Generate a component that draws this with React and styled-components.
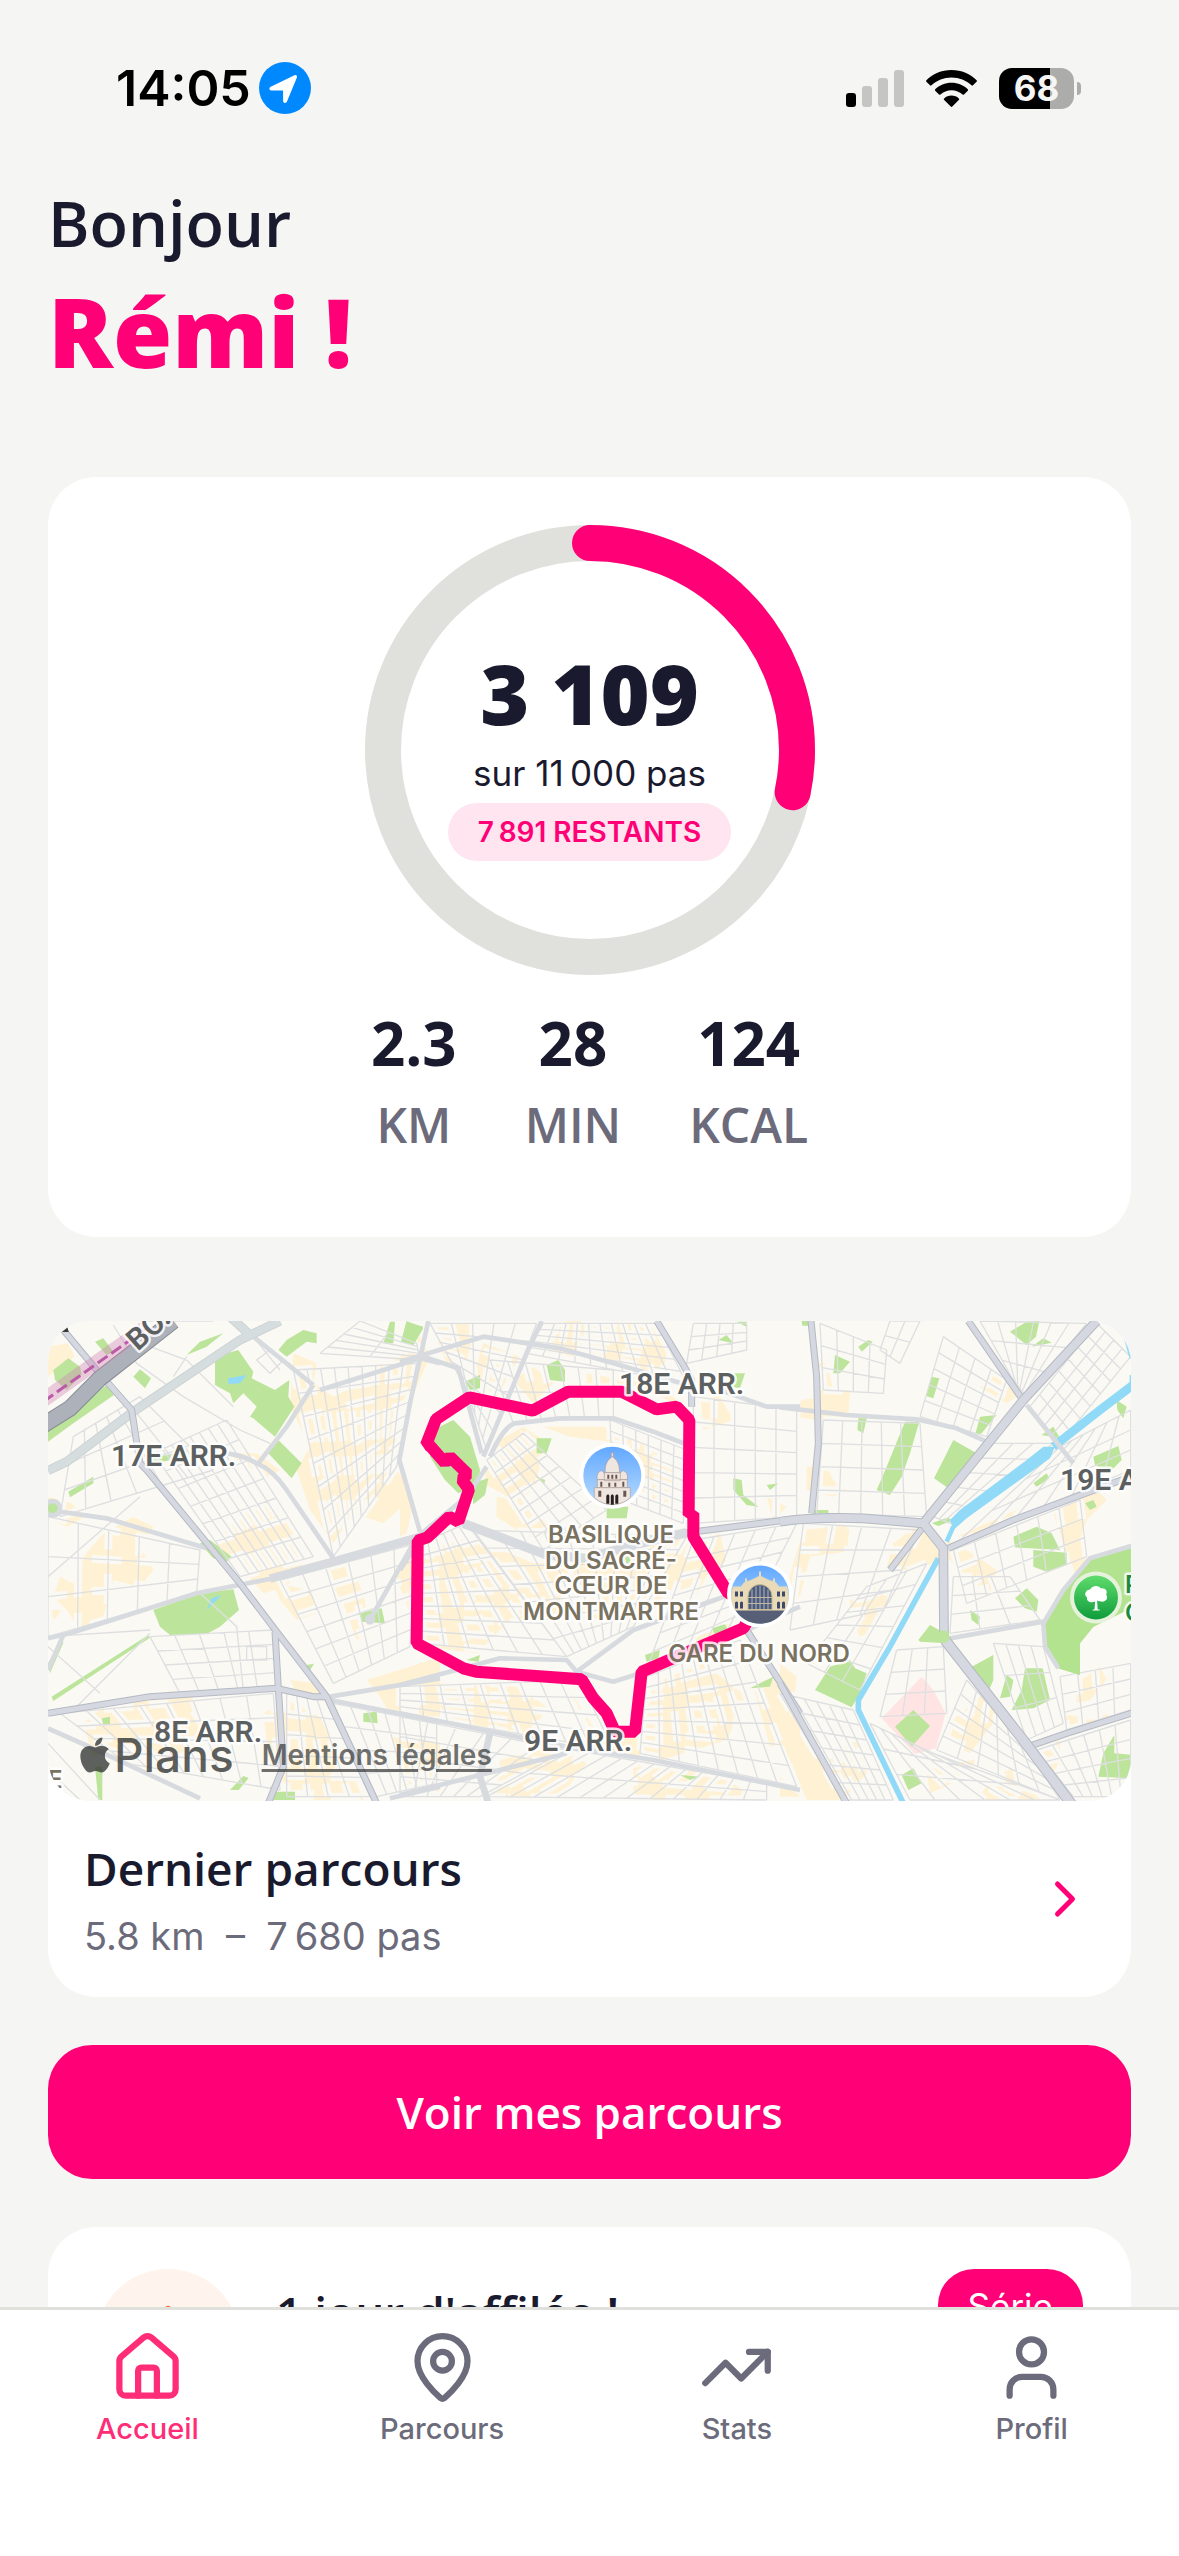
import React from "react";
import styled, { createGlobalStyle } from "styled-components";
import { House, MapPin, TrendingUp, User, ChevronRight, Flame } from "lucide-react";
import { FaApple } from "react-icons/fa";

const pink = "#ff0076";
const ink = "#1a1a2e";
const muted = "#6c6b7b";
const line = "#e0e1dc";
const display = `"Open Sans", "Noto Sans", sans-serif`;
const body = `Inter, "Liberation Sans", sans-serif`;

const GlobalStyle = createGlobalStyle`
  *, *::before, *::after { box-sizing: border-box; }
  body { margin: 0; background: #f5f5f3; color: ${ink}; font-family: ${body}; }
  h1, h2, p { margin: 0; }
`;

const Screen = styled.div`
  height: 100vh;
  display: flex;
  flex-direction: column;
  background: #f5f5f3;
`;

const StatusBar = styled.header`
  flex: none;
  display: flex;
  justify-content: space-between;
  align-items: center;
  padding: 62px 98px 0 116px;
  color: #000;
`;

const StatusGroup = styled.div`
  display: flex;
  align-items: center;
  gap: ${(p) => p.$gap}px;
`;

const Clock = styled.span`
  font-size: 50px;
  line-height: 52px;
  font-weight: 600;
`;

const Battery = styled.div`
  position: relative;
  width: 75px;
  height: 41px;
  margin-right: 7px;
  border-radius: 13px;
  background: linear-gradient(90deg, #000 68%, #acacab 68%);
  color: #f5f5f3;
  font-size: 35px;
  line-height: 41px;
  font-weight: 700;
  text-align: center;
  &::after {
    content: "";
    position: absolute;
    left: 78px;
    top: 14px;
    width: 4px;
    height: 13px;
    border-radius: 0 6px 6px 0;
    background: #acacab;
  }
`;

const Main = styled.main`
  flex: 1;
  min-height: 0;
  overflow-y: auto;
  scrollbar-width: none;
  display: flex;
  flex-direction: column;
  gap: 48px;
  padding: 68px 48px 48px;
  & > * { flex: none; }
`;

const Greeting = styled.h1`
  display: flex;
  flex-direction: column;
  gap: 8px;
  margin-bottom: 39px;
  font-family: ${display};
`;

const Hello = styled.span`
  font-size: 63px;
  line-height: 82px;
  font-weight: 600;
`;

const Name = styled.span`
  font-size: 96px;
  line-height: 118px;
  font-weight: 800;
  color: ${pink};
`;

const Card = styled.section`
  background: #fff;
  border-radius: 48px;
`;

const GoalCard = styled(Card)`
  display: flex;
  flex-direction: column;
  align-items: center;
  gap: 32px;
  margin-bottom: 36px;
  padding: 48px 48px 82px;
`;

const Ring = styled.div`
  display: grid;
  place-items: center;
  & > * { grid-area: 1 / 1; }
`;

const RingContent = styled.div`
  display: flex;
  flex-direction: column;
  align-items: center;
  gap: 6px;
  padding-top: 4px;
`;

const Steps = styled.span`
  font-family: ${display};
  font-size: 84px;
  line-height: 100px;
  font-weight: 800;
`;

const Goal = styled.span`
  font-size: 35px;
  line-height: 48px;
`;

const Remaining = styled.span`
  padding: 0 30px;
  border-radius: 29px;
  background: #ffe5ef;
  color: ${pink};
  font-size: 28px;
  line-height: 58px;
  font-weight: 600;
`;

const Stats = styled.div`
  display: flex;
  gap: 68px;
`;

const Stat = styled.div`
  display: flex;
  flex-direction: column;
  align-items: center;
  gap: 16px;
  font-family: ${display};
`;

const StatValue = styled.span`
  font-size: 60px;
  line-height: 72px;
  font-weight: 700;
`;

const StatUnit = styled.span`
  font-size: 48px;
  line-height: 60px;
  font-weight: 600;
  color: ${muted};
`;

const MapFrame = styled.div`
  position: relative;
  height: 480px;
  border-radius: 42px;
  overflow: hidden;
  background: #fbf9f3;
  & > svg { display: block; width: 100%; height: 100%; }
`;

const MapCredit = styled.div`
  position: absolute;
  left: 32px;
  bottom: 18px;
  display: flex;
  align-items: center;
  gap: 28px;
  color: rgba(50, 52, 50, 0.78);
`;

const MapBrand = styled.span`
  display: flex;
  align-items: center;
  gap: 4px;
  font-size: 46px;
  line-height: 56px;
  font-weight: 500;
  & > svg { width: 30px; height: 40px; }
`;

const MapLegal = styled.a`
  color: rgba(50, 52, 50, 0.7);
  font-size: 28px;
  line-height: 32px;
  font-weight: 600;
  text-decoration-thickness: 3px;
  text-underline-offset: 4px;
`;

const RouteLink = styled.a`
  display: flex;
  align-items: center;
  justify-content: space-between;
  padding: 36px;
  color: inherit;
  text-decoration: none;
`;

const RouteText = styled.div`
  display: flex;
  flex-direction: column;
  gap: 12px;
`;

const Title = styled.h2`
  font-family: ${display};
  font-size: 46px;
  line-height: 62px;
  font-weight: 600;
`;

const RouteMeta = styled.p`
  font-size: 38px;
  line-height: 50px;
  color: ${muted};
  white-space: pre-wrap;
`;

const PrimaryButton = styled.button`
  width: 100%;
  height: 134px;
  border: 0;
  border-radius: 44px;
  background: ${pink};
  color: #fff;
  font-family: ${display};
  font-size: 44px;
  line-height: 60px;
  font-weight: 600;
`;

const StreakCard = styled(Card)`
  display: flex;
  align-items: flex-start;
  gap: 36px;
  padding: 42px 48px;
`;

const StreakIcon = styled.span`
  display: grid;
  place-items: center;
  width: 144px;
  height: 144px;
  border-radius: 50%;
  background: #fff3ed;
  color: #ff6b35;
`;

const StreakText = styled.div`
  flex: 1;
  padding-top: 12px;
`;

const Tag = styled.span`
  padding: 0 30px;
  border-radius: 36px;
  background: ${pink};
  color: #fff;
  font-size: 35px;
  line-height: 74px;
`;

const TabBar = styled.nav`
  flex: none;
  display: grid;
  grid-template-columns: repeat(4, 1fr);
  padding: 20px 0 96px;
  border-top: 3px solid ${line};
  background: #fff;
`;

const Tab = styled.a`
  display: flex;
  flex-direction: column;
  align-items: center;
  gap: 6px;
  padding-bottom: 13px;
  color: ${(p) => (p.$active ? "#ff2d78" : muted)};
  font-size: 29px;
  line-height: 36px;
  font-weight: 500;
  text-decoration: none;
`;

/* ---------- map drawing ---------- */

const tiles = [-8, 352, 732];

const Tile = ({ n, children }) => (
  <g transform={`translate(${tiles[n]} -11) scale(0.33333)`}>{children}</g>
);

// Street mesh stretched over a quadrilateral: corners a, b, c, d in order.
const mesh = (a, b, c, d, cols, rows) => {
  const mix = (p, q, t) => [
    Math.round(p[0] + (q[0] - p[0]) * t),
    Math.round(p[1] + (q[1] - p[1]) * t),
  ];
  let out = "";
  for (let i = 0; i <= cols; i++) {
    out += `M${mix(a, b, i / cols)}L${mix(d, c, i / cols)}`;
  }
  for (let j = 0; j <= rows; j++) {
    out += `M${mix(a, d, j / rows)}L${mix(b, c, j / rows)}`;
  }
  return out;
};

const blocks = [
  "M24 110l60-10 20 40-80 60zM760 130l70 30-10 60 60 40 120-60 60-90 80 60-60 120-20 160 50 120-80 70-90-30-60 90-70-100-40-120 40-70-60-120zM24 560l70 20 40 40-50 30-60-20zM130 740l60-70 90-50 60 30-40 60 40 70-40 50-80-20-30 110-70 40-40-60-40-40 20-60 60 30zM520 690l80-60 60-60 80 70 60 100-60 90-70 20-80-90zM850 780l80-20 40 90 20 110-40 30-40-110zM700 820l110 20 20 70-60 20-50-60zM1060 780l100-60 40 10v160l-90 20zM130 1240l60-50 220-50 100 0-60 70 40 60-100 90-120-60-110 40zM670 1210l70-40 100 50 60 130-60 90-100 0-60-150zM980 1110l130-40 90-30v180l-150-10-30-50zM560 430l90 0 70 50-40 20zM24 900l40 0-20 30zM1050 1270l150 30v150l-90-60zM750 1110l80 10 20 50-80-20zM830 1400l110 0 30 70h-150z",
  "M0 100l60-20 30 60-40 90-50 40zM90 40l140 0-30 110-60 10zM250 100l110 40-70 120-70-60zM450 40l90-10 40 60-60 50-100-30zM560 40l190 0 60 110-60 40-180-60zM400 170l60 50-60 60-60-70zM560 190l230 40 60 60-160-70-130 0zM0 480l40 100-20 90-20 10zM280 400l90-50 60 40-20 130-50 60-110-60zM430 350l180 0 110 50 100 60-10 140-90-60-50-140-160-20zM290 560l100 20 70 90-80 10-90-60zM80 720l130-40 190 80 110 0-40 150-150 30-90 90-150-20zM520 760l150-30 150 60-50 100-130 60-110-50zM700 700l140-30 90 110-50 90-120-50zM100 1120l250 10 90 60-40 80-230-30-60-60zM500 1130l100 150 130 0 30-160 150-60 130 100-60 130-260 80-110-50zM0 1290l120 20-10 90-110 30zM300 1350l160-40 100 50-80 100-190 0zM700 1370l260 20 80 60-60 20h-280zM60 1000l100 40-40 20zM1060 1130l80-40 60 100v110l-90 10zM900 700l60-30 20 90-30 20zM880 960l120-20-20 70-80 30zM1100 560l60 30-40 40zM900 250l60 10 40 70-90 30z",
  "M100 160l40 0 20 80 50 0-5 80-90 10-80-10 30-50 40-5zM80 470l60 0 20 40 40 30-40 20-80-20zM70 660l140-15-10 80-110 15-30 120-50 0zM340 700l80-60 60 60 0 50-90 40-70-20zM210 870l60-50 60 10-30 120-60 30-30-60zM500 690l60 30 90 60-20 70-70-50-60-60zM530 680l190-85 20 30-110 50zM600 230l60-60 50 90-30 20zM820 610l130-70 30 30-60 60-20 60 20 70-30 40-40-100zM0 1060l50 40-10 100-40 20zM0 1280l80-20 50 80 100-50 30 100-70 80h-110zM440 1380l180-40-60 60-110 50zM520 1230l90-80 60 50-100 130-60-30zM760 1320l80-30 0 60-20 40zM850 1210l80 20 60-20-40 50-90 10zM890 1120l70-50 20 40-50 60-40 10zM610 1440l80-70 90 100h-170zM0 1400l60 60h-60z",
];

const greens = [
  "M525 140l70-20 45 65-5 20 70 35 43-30-3 50 18 30-58 90-65-55-10-5 20-30-40-40-30 30-10-30-45-25zM715 390l70 70-30 45-70-75zM340 900l140-50 100-12 17 62-57 50-40 22-110 3-30-25zM440 135l40-40 70-25-50 40zM40 180l45-35 35 25 5 25-45 45-35-30zM165 95l25-10 30 40-20 10zM280 200l20-22 33 27-18 30zM24 395v-65l126-70 50-35 22 30-122 85zM85 545l75-45v20l-70 42zM715 120l25-30 50-30 40 10v30l-30-5-60 45zM1050 35h15l-5 65h-30zM1100 33l50 22-30 50-37-10zM480 700l30-10 65 50-15 15-40-10zM960 910l65-15 10 45-70-5zM970 1210l40-5 3 35-43-5zM185 1225l25-5v25h-20zM690 1425l10 20h65v25h-65zM35 1160l290-185 5 8-290 190zM330 445l60-12 50-12v8l-60 24-50 5zM24 1060l40-70 6 8-40 92zM570 1440l40-42 16 6-30 36zM165 1370h22v100h-12zM800 1065l22-4-12 20z",
  "M5 90l15-55 50 15-30 55zM100 360l60-30 50 50 30 100-5 40-60 30-40-40-45-70zM215 520l50-15-10 50-35 28zM195 215l45-20v40l-30 5zM440 165l35-15 20 30v35l-45-5zM410 385l45 0-15 45h-30zM1000 190h35l-15 45-25-5zM955 90l25-15 20 25zM1010 35h30v16zM1000 505l25 5 5 45 45 35-35-5-40-45zM1100 525l35-5-25 20zM620 590h65l-5 35h-60zM735 1035l45-15-5 25-35 10zM1050 1135l70-35-10 30zM840 1395l60 5-30 10zM200 1050l40-15-5 20zM405 498l30 12-2 14zM935 955l40-12 10 20-40 10zM675 740h16v20h-12z",
  "M690 65l50-30 38-2-10 47-28 25zM755 110l35-25 25 13zM235 110l30-20 13 5-33 30zM165 135l45 20-30 35h-20zM455 200l23 5-18 60-22-7zM235 325h25l-10 45-18-10zM375 335h43l-28 95-25 70-35 55-40-15 30-70zM520 390l70 40-85 105-43-30 33-65zM600 320l50-5-45 55-20 5zM1010 270l30 20-10 35-18-25zM940 440l75-32 10 42-35 35-45-20zM760 520l40-30 8 15-38 25zM915 580l25-10 10 20-20 10zM700 680l70-30 45 20 25 50-135-8zM760 720l100 8v37l-60 20-40-15zM705 865l35-30 35 35-5 35-35-10zM570 900l30 20-5 25-20-15zM415 990l35-45 55 30-5 25-80-5zM150 1070l60-20 15 25 35 15-20 60-25 42-110-52zM575 1070l65-35v75l-15 35zM680 1095l20 15-10 50-30 5zM735 1075h53l22 95-50 25-65 5 30-60zM365 1395l35-20 25 45-40 20zM970 1330l33-55v55l60 5v70l-108-5zM785 375l35-25 20 35zM455 640l50-18 10 10-40 16zM100 600h45v12h-45zM1063 705l-133 40-80 95-60 100 5 70 40 65 65 20v-95l40-50 123-60zM65 33h20v14h-18z",
];

const streets = [
  mesh([100, 380], [300, 260], [520, 480], [60, 620], 6, 3) +
    mesh([340, 430], [560, 330], [820, 740], [600, 800], 8, 7) +
    mesh([760, 180], [1130, 160], [1070, 470], [880, 740], 9, 8) +
    mesh([840, 130], [960, 33], [1130, 100], [1140, 150], 5, 2) +
    mesh([24, 620], [480, 720], [470, 850], [24, 980], 5, 3) +
    mesh([720, 810], [1130, 700], [1110, 1010], [880, 1120], 6, 6) +
    mesh([330, 980], [700, 960], [710, 1130], [420, 1150], 5, 4) +
    mesh([60, 1210], [700, 1150], [720, 1440], [260, 1360], 8, 4) +
    mesh([740, 1150], [860, 1170], [990, 1460], [740, 1460], 4, 5) +
    mesh([880, 1180], [1190, 1240], [1190, 1420], [1010, 1460], 6, 4) +
    "M220 45L290 160L430 260L600 360L690 400M330 110L440 150L580 290M440 140L400 200M640 80L720 180M24 980L330 960M24 1010L180 1150M100 1200L330 970M24 800L300 560M480 850L590 950L610 1140M24 1300L180 1470M24 1380L120 1470M300 33L520 33M650 150l40-30 35 35-35 35zM620 1010h60v40h-60z",
  mesh([90, 40], [410, 40], [260, 420], [200, 240], 5, 7) +
    mesh([430, 40], [770, 40], [860, 220], [380, 130], 10, 5) +
    mesh([270, 150], [640, 180], [640, 320], [340, 340], 7, 2) +
    mesh([260, 450], [370, 370], [620, 600], [430, 720], 5, 7) +
    mesh([630, 330], [860, 420], [850, 640], [640, 560], 6, 7) +
    mesh([60, 700], [200, 640], [500, 1040], [60, 1000], 6, 8) +
    mesh([220, 660], [860, 680], [700, 950], [500, 1040], 9, 7) +
    mesh([880, 690], [1190, 640], [1040, 940], [740, 1080], 5, 7) +
    mesh([0, 1130], [540, 1110], [640, 1320], [0, 1210], 9, 4) +
    mesh([0, 1220], [500, 1320], [240, 1460], [0, 1460], 6, 4) +
    mesh([520, 1320], [1100, 1420], [1100, 1470], [260, 1460], 12, 2) +
    mesh([740, 1100], [1020, 990], [1190, 1430], [720, 1330], 8, 7) +
    mesh([880, 260], [1190, 300], [1190, 620], [880, 640], 5, 5) +
    mesh([880, 40], [1040, 40], [1040, 120], [860, 160], 4, 3),
  mesh([120, 40], [320, 120], [310, 250], [130, 240], 4, 3) +
    mesh([330, 33], [420, 33], [360, 160], [300, 120], 2, 2) +
    mesh([490, 80], [680, 210], [620, 380], [420, 320], 4, 5) +
    mesh([600, 33], [920, 40], [740, 260], [700, 210], 6, 3) +
    mesh([950, 40], [1052, 140], [840, 400], [750, 290], 4, 7) +
    mesh([130, 330], [420, 340], [440, 620], [110, 610], 5, 4) +
    mesh([640, 400], [820, 400], [510, 640], [460, 620], 3, 5) +
    mesh([840, 410], [1052, 300], [1052, 480], [530, 700], 6, 3) +
    mesh([520, 720], [900, 570], [920, 740], [560, 880], 6, 3) +
    mesh([70, 640], [420, 660], [310, 900], [30, 960], 4, 4) +
    mesh([260, 830], [440, 760], [240, 1140], [80, 1060], 3, 6) +
    mesh([350, 1020], [490, 1010], [500, 1210], [300, 1220], 3, 3) +
    mesh([520, 800], [690, 800], [780, 930], [510, 970], 3, 3) +
    mesh([0, 1150], [220, 1200], [340, 1470], [190, 1470], 6, 6) +
    mesh([470, 1320], [560, 1110], [740, 1310], [840, 1470], 5, 6) +
    mesh([270, 1240], [460, 1330], [840, 1470], [390, 1470], 6, 3) +
    mesh([640, 1000], [790, 1010], [850, 1240], [740, 1290], 4, 3) +
    mesh([840, 1100], [1052, 1060], [1052, 1200], [860, 1260], 4, 3) +
    mesh([770, 1320], [1052, 1230], [1052, 1460], [880, 1460], 6, 4),
];

const avenues = [
  "M640 80L820 225M840 240L1000 190L1140 145L1200 160M820 225L740 350L655 460M545 430Q600 430 650 460Q700 480 740 540L880 745M1165 33L1110 280L1078 450L1140 665M24 600L200 625L500 715M24 985L90 970L470 850L700 805M870 1160L1200 1105M870 1170L1200 1235M24 1255L170 1320L480 1465M1120 700L990 930M1050 1465L1200 1430M24 1080L70 975",
  "M0 155L250 80L480 115L640 160L880 230M70 140L175 175L245 430M425 33L380 130L250 440M260 470L200 560L40 690M270 440Q310 350 345 340L480 325L640 325L760 365L865 405M960 240L1100 290L1200 290M530 1085L700 960L1000 850M1040 960L1200 890M0 1125L300 1045L500 1050L530 1085L640 1115L720 1090M0 1210L500 1310L760 1350L1200 1440M0 1455L240 1395L500 1330M60 690L0 780",
  "M0 292L200 315L410 328L530 355L620 395M740 285L880 460M510 985L790 935M1063 705L930 745L850 840L790 940L795 1010L835 1075",
];

const boulevards = [
  "M70 60L170 180L275 300L300 460L320 480L600 820L710 965L860 1160L940 1330L1010 1480M705 965L715 1135L730 1370L685 1480M24 1210L330 1160L710 1135L820 1160L860 1160",
  "M770 33L850 165L875 210L875 290M860 668L1200 625M1040 960L1200 1210",
  "M93 33L110 200L115 400L95 610M0 635Q100 620 250 625L430 640L490 715L492 980M950 33L730 270L430 640M565 33L725 265M430 650L330 780M505 715L700 630L1060 497M745 1310L860 1270L1060 1208M0 1120L200 1480",
];

const Label = styled.text`
  font-family: ${(p) => (p.$area ? "Roboto, sans-serif" : body)};
  font-size: ${(p) => (p.$area ? 30 : 24)}px;
  font-weight: 600;
  fill: ${(p) => (p.$park ? "#1c8a3c" : p.$area ? "#5c6060" : "#7a7261")};
  stroke: rgba(255, 255, 255, 0.85);
  stroke-width: 5px;
  stroke-linejoin: round;
  paint-order: stroke;
`;

const sacreCoeur = (
  <g transform="translate(564.3 154.7)">
    <circle r="33" fill="#fff" />
    <circle r="29" fill="url(#sky)" />
    <g fill="#efe6e0" stroke="#a8938c" strokeWidth="0.6">
      <path d="M-1-23h2v5h-2z" />
      <path d="M-7-3c-1-8 3-14 7-16c4 2 8 8 7 16z" />
      <path d="M-15 4c-1-5 1-8 4-9c3 1 4 4 4 9zM7 4c0-5 1-8 4-9c3 1 5 4 4 9z" />
      <path d="M-8-3h16v8h-16zM-15 4h30v8h-30z" />
      <path d="M-18 12h36v10q-8 7-18 7t-18-7z" />
    </g>
    <g fill="#6b5550">
      <path d="M-5-1h2v4h-2zM-1-1h2v4h-2zM3-1h2v4h-2zM-12 6h2v5h-2zM10 6h2v5h-2zM-4 7h2v4h-2zM2 7h2v4h-2z" />
      <path d="M-14 15h3v6h-3zM11 15h3v6h-3z" />
    </g>
    <path d="M-6 28v-8q2-3 3 0v8zM-1.500 29v-9q1.500-3 3 0v9zM3 28v-8q2-3 3 0v8z" fill="#2b2020" />
  </g>
);

const gareDuNord = (
  <g transform="translate(712 273.500)">
    <circle r="33" fill="#fff" />
    <circle r="29" fill="url(#sky)" />
    <path d="M-25 15h50a29 29 0 0 1-50 0z" fill="#565f75" />
    <path d="M-27-8h8l3-4l8-3l8-4l8 4l8 3l3 4h8a29 29 0 0 1-2 24h-50a29 29 0 0 1-2-24z" fill="#eadbb8" />
    <path d="M-1-23h2v5h-2zM-15-16h2v4h-2zM13-16h2v4h-2z" fill="#eadbb8" />
    <path d="M-12 15V2A12 12 0 0 1 12 2V15z" fill="#4a5c84" stroke="#c9b98f" />
    <path d="M-8 15v-20M-4 15v-23M0 15v-24M4 15v-23M8 15v-20M-12 3h24M-12 9h24" stroke="#d8cba6" strokeWidth="0.8" />
    <path d="M-25 14v-6q2-2 3 0v6zM-20 14v-6q2-2 3 0v6zM17 14v-6q2-2 3 0v6zM22 14v-6q2-2 3 0v6zM-25 2v-5h3v5zM-20 2v-5h3v5zM17 2v-5h3v5zM22 2v-5h3v5z" fill="#3d4a6c" />
  </g>
);

const ParisMap = () => (
  <svg viewBox="0 0 1083 480" preserveAspectRatio="xMidYMid slice" role="img" aria-label="Carte du dernier parcours">
    <defs>
      <linearGradient id="sky" x1="0" y1="0" x2="0" y2="1">
        <stop offset="0" stopColor="#62a8ff" />
        <stop offset="1" stopColor="#b9dcff" />
      </linearGradient>
      <linearGradient id="park" x1="0" y1="0" x2="0" y2="1">
        <stop offset="0" stopColor="#5fdc6c" />
        <stop offset="1" stopColor="#0f9c3c" />
      </linearGradient>
    </defs>
    <rect width="1083" height="480" fill="#fbf9f3" />
    {blocks.map((d, n) => (
      <Tile n={n} key={n}><path d={d} fill="#fff1d3" /></Tile>
    ))}
    {streets.map((d, n) => (
      <Tile n={n} key={n}>
        <path d={d} fill="none" stroke="#fbf9f3" strokeWidth="24" strokeDasharray="58 74 90 46" />
      </Tile>
    ))}
    {greens.map((d, n) => (
      <Tile n={n} key={n}><path d={d} fill="#bce49b" /></Tile>
    ))}
    <Tile n={0}>
      <path d="M565 205l55-10-20 25-35 2zM500 900l15-35 30-10-25 25z" fill="#90daf8" />
    </Tile>
    <Tile n={2}>
      <path d="M425 1100l35 40 37 70-29 105-63 17-100-107z" fill="#ffe4e3" />
      <path d="M345 1250l55-50 50 48-55 62z" fill="#bce49b" />
    </Tile>
    {streets.map((d, n) => (
      <Tile n={n} key={n}><path d={d} fill="none" stroke="#dedfe1" strokeWidth="4" /></Tile>
    ))}
    <Tile n={2}>
      <path d="M1063 705l-133 40-80 95-60 100 5 70 40 65 65 20v-95l40-50 123-60z" fill="#b3e38f" />
      <g fill="none" stroke="#90daf8">
        <path d="M1063 222L960 300L820 410" strokeWidth="26" />
        <path d="M520 650L500 695" strokeWidth="14" />
        <path d="M475 745L390 900L330 1010L235 1170V1200L370 1480" strokeWidth="17" />
        <path d="M1040 90L1056 145M1056 195v50" strokeWidth="14" />
      </g>
      <path d="M510 630l30-30 200-150 50-40h35l-15 35-250 180-40 35z" fill="#90daf8" />
    </Tile>
    {avenues.map((d, n) => (
      <Tile n={n} key={n}>
        <path d={d} fill="none" stroke="#d7dbdf" strokeWidth="14" strokeLinejoin="round" />
      </Tile>
    ))}
    <Tile n={0}>
      <circle cx="38" cy="595" r="22" fill="#bce49b" stroke="#d7dbdf" strokeWidth="14" />
      <circle cx="990" cy="928" r="16" fill="#d7dbdf" />
      <g fill="none">
        <path d="M24 482L80 455L280 305L600 90L720 33M570 20L630 75" stroke="#ccd3d6" strokeWidth="28" />
        <path d="M24 482L80 455L280 305L600 90L720 33M570 20L630 75" stroke="#d6dddf" strokeWidth="22" />
        <path d="M690 806L880 755L1150 678" stroke="#d7dbdf" strokeWidth="26" />
      </g>
    </Tile>
    <Tile n={1}>
      <path d="M190 640L440 735L560 745L700 705L860 668" fill="none" stroke="#d7dbdf" strokeWidth="28" />
      <path d="M270 1270L240 1400L265 1480" fill="none" stroke="#d7dbdf" strokeWidth="20" />
    </Tile>
    {boulevards.map((d, n) => (
      <Tile n={n} key={n}>
        <path d={d} fill="none" stroke="#b4b9c2" strokeWidth="21" strokeLinejoin="round" />
        <path d={d} fill="none" stroke="#d5d8e1" strokeWidth="15" strokeLinejoin="round" />
      </Tile>
    ))}
    <Tile n={2}>
      <g fill="none" stroke="#d5d8e1" strokeLinejoin="round">
        <path d="M495 990L745 1310L880 1490" stroke="#b4b9c2" strokeWidth="33" />
        <path d="M495 990L745 1310L880 1490" strokeWidth="27" />
        <path d="M950 33L730 270L430 640L490 715L492 980M0 635Q100 620 250 625L430 640" stroke="#b4b9c2" strokeWidth="29" />
        <path d="M950 33L730 270L430 640L490 715L492 980M0 635Q100 620 250 625L430 640" strokeWidth="23" />
      </g>
      <circle cx="490" cy="980" r="19" fill="#bce49b" />
    </Tile>
    <Tile n={0}>
      <g fill="none">
        <path d="M10 345L90 295L180 205L400 33" stroke="#888d96" strokeWidth="50" />
        <path d="M10 345L90 295L180 205L400 33" stroke="#adb2ba" strokeWidth="44" />
        <path d="M10 270L320 50" stroke="#cf82b8" strokeOpacity="0.38" strokeWidth="44" />
        <path d="M10 275L320 55" stroke="#bb5ba8" strokeWidth="9" strokeDasharray="36 14" />
      </g>
      <path d="M62 66l20-16 4 16z" fill="#3a3c3c" />
    </Tile>
    <Tile n={1}>
      <path
        d="M665 245H505L398 302L208 262L108 328L78 405H88L135 458L150 440L203 492L185 508L207 538L175 635L148 620L82 682L53 692L50 1000L190 1075L228 1085L545 1108L580 1165L620 1210L645 1265H705L725 1085L1030 955L1080 870L985 850L880 680V610L866 615L868 330L830 290L770 298Z"
        fill="none"
        stroke={pink}
        strokeWidth="36"
        strokeLinejoin="bevel"
      />
    </Tile>
    {sacreCoeur}
    {gareDuNord}
    <g transform="translate(1048 276.500)">
      <circle r="26" fill="#e6f2dc" />
      <circle r="22" fill="url(#park)" />
      <path d="M-1.500 12l.6-8c-4 2-9 0-8-4c-4-3-1-8 3-8c2-4 8-5 11-1c4-1 7 3 5 6c3 4-1 8-5 7q-2 0-4-1l.6 9h2v1h-7v-1z" fill="#fff" />
    </g>
    <g transform="rotate(-42 90 28)">
      <Label $area x="88" y="30">BO.</Label>
    </g>
    <Label $area x="63" y="145">17E ARR.</Label>
    <Label $area x="571" y="73">18E ARR.</Label>
    <Label $area x="1012" y="169">19E ARR.</Label>
    <Label $area x="106" y="421">8E ARR.</Label>
    <Label $area x="476" y="430">9E ARR.</Label>
    <Label x="563" y="222" textAnchor="middle">BASILIQUE</Label>
    <Label x="563" y="248" textAnchor="middle">DU SACRÉ-</Label>
    <Label x="563" y="273" textAnchor="middle">CŒUR DE</Label>
    <Label x="563" y="299" textAnchor="middle">MONTMARTRE</Label>
    <Label x="711" y="341" textAnchor="middle">GARE DU NORD</Label>
    <Label $park x="1077" y="272">P</Label>
    <Label $park x="1077" y="300">C</Label>
    <Label x="0" y="467">E</Label>
  </svg>
);

const SignalIcon = () => (
  <svg width="58" height="37" viewBox="0 0 58 37" aria-hidden="true">
    <rect y="23" width="10" height="14" rx="3" fill="#000" />
    <rect x="16" y="16" width="10" height="21" rx="3" fill="#c5c5c3" />
    <rect x="32" y="8" width="10" height="29" rx="3" fill="#c5c5c3" />
    <rect x="48" width="10" height="37" rx="3" fill="#c5c5c3" />
  </svg>
);

const WifiIcon = () => (
  <svg width="51" height="37" viewBox="0 0 51 37" aria-hidden="true">
    <path d="M25.500 0C35.500 0 44.500 4 50.600 10.300q.6.700 0 1.400l-3.600 3.600q-.8.700-1.500 0C40.200 10.300 33.200 7.400 25.500 7.400S10.800 10.300 5.500 15.300q-.7.700-1.500 0L.4 11.700q-.6-.7 0-1.400C6.500 4 15.500 0 25.500 0z" />
    <path d="M25.500 12.800c6.400 0 12.100 2.500 16.300 6.500q.7.700 0 1.400L38 24.500q-.7.700-1.400 0c-3-2.700-6.800-4.300-11.100-4.300s-8.100 1.600-11.100 4.300q-.7.700-1.400 0L9.200 20.700q-.7-.7 0-1.400c4.200-4 9.900-6.500 16.300-6.500z" />
    <path d="M25.500 25.600c2.800 0 5.400 1 7.300 2.800q.8.700 0 1.500l-6.500 6.700q-.8.700-1.600 0l-6.500-6.700q-.8-.8 0-1.500c1.900-1.800 4.500-2.800 7.300-2.800z" />
  </svg>
);

const LocationIcon = () => (
  <svg width="52" height="52" viewBox="0 0 52 52" aria-hidden="true">
    <circle cx="26" cy="26" r="26" fill="#0088ff" />
    <path d="M35.500 13.200c1.700-.7 3.100.7 2.400 2.400L28 39.600c-.9 2.100-3.900 1.500-3.900-.7V28.500H12.500c-2.300 0-2.900-2.900-.8-3.800z" fill="#fff" />
  </svg>
);

const ProgressRing = ({ value, goal }) => {
  const length = 2 * Math.PI * 207;
  return (
    <svg width="450" height="450" viewBox="0 0 450 450" fill="none" strokeWidth="36" aria-hidden="true">
      <circle cx="225" cy="225" r="207" stroke={line} />
      <circle
        cx="225"
        cy="225"
        r="207"
        stroke={pink}
        strokeLinecap="round"
        strokeDasharray={`${(value / goal) * length} ${length}`}
        transform="rotate(-90 225 225)"
      />
    </svg>
  );
};

const stats = [
  ["2.3", "KM"],
  ["28", "MIN"],
  ["124", "KCAL"],
];

const tabs = [
  ["Accueil", House],
  ["Parcours", MapPin],
  ["Stats", TrendingUp],
  ["Profil", User],
];

export default function App() {
  return (
    <Screen>
      <GlobalStyle />
      <StatusBar>
        <StatusGroup $gap={8}>
          <Clock>14:05</Clock>
          <LocationIcon />
        </StatusGroup>
        <StatusGroup $gap={22}>
          <SignalIcon />
          <WifiIcon />
          <Battery>68</Battery>
        </StatusGroup>
      </StatusBar>
      <Main>
        <Greeting>
          <Hello>Bonjour</Hello>
          <Name>Rémi !</Name>
        </Greeting>
        <GoalCard>
          <Ring>
            <ProgressRing value={3109} goal={11000} />
            <RingContent>
              <Steps>3{"\u00a0"}109</Steps>
              <Goal>sur 11{"\u202f"}000 pas</Goal>
              <Remaining>7{"\u202f"}891 RESTANTS</Remaining>
            </RingContent>
          </Ring>
          <Stats>
            {stats.map(([value, unit]) => (
              <Stat key={unit}>
                <StatValue>{value}</StatValue>
                <StatUnit>{unit}</StatUnit>
              </Stat>
            ))}
          </Stats>
        </GoalCard>
        <Card>
          <MapFrame>
            <ParisMap />
            <MapCredit>
              <MapBrand><FaApple aria-hidden="true" />Plans</MapBrand>
              <MapLegal href="#mentions">Mentions légales</MapLegal>
            </MapCredit>
          </MapFrame>
          <RouteLink href="#dernier-parcours">
            <RouteText>
              <Title>Dernier parcours</Title>
              <RouteMeta>5.8 km{"  –  "}7{"\u202f"}680 pas</RouteMeta>
            </RouteText>
            <ChevronRight size={60} color={pink} aria-hidden="true" />
          </RouteLink>
        </Card>
        <PrimaryButton type="button">Voir mes parcours</PrimaryButton>
        <StreakCard>
          <StreakIcon><Flame size={84} aria-hidden="true" /></StreakIcon>
          <StreakText>
            <Title>1 jour d'affilée !</Title>
          </StreakText>
          <Tag>Série</Tag>
        </StreakCard>
      </Main>
      <TabBar>
        {tabs.map(([name, Icon], i) => (
          <Tab key={name} href={`#${name.toLowerCase()}`} $active={i === 0}>
            <Icon size={75} aria-hidden="true" />
            {name}
          </Tab>
        ))}
      </TabBar>
    </Screen>
  );
}
